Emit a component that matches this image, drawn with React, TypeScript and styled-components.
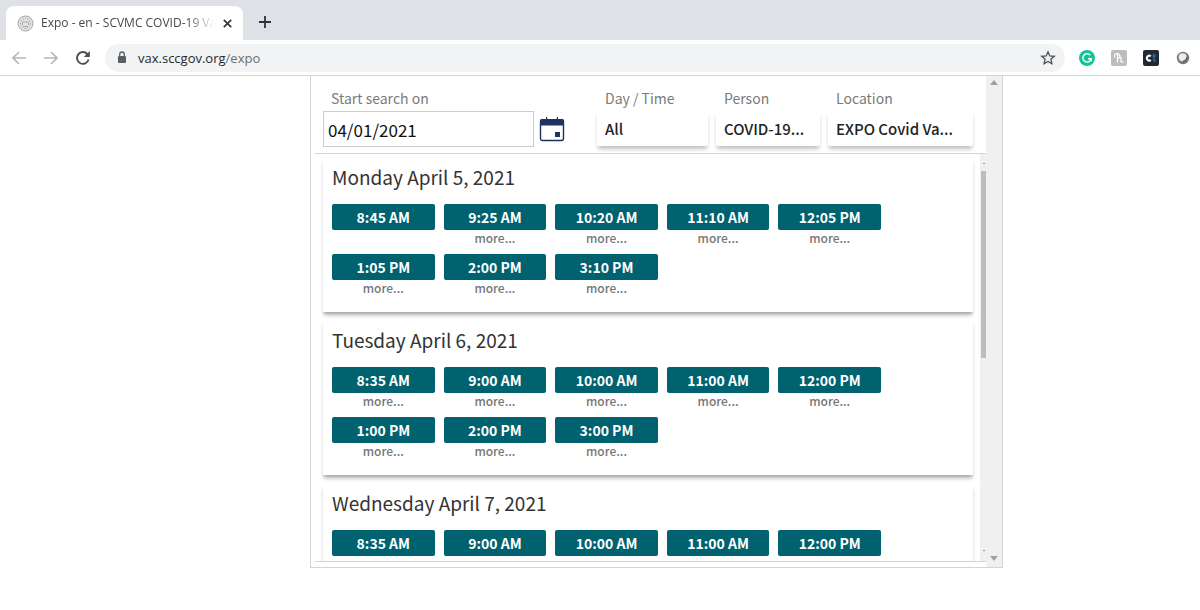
import React from "react";
import styled, { createGlobalStyle } from "styled-components";

const GlobalStyle = createGlobalStyle`
  * { box-sizing: border-box; }
  html, body { margin: 0; background: #fff; }
  body { font-family: "Noto Sans CJK SC", "Open Sans", sans-serif; color: #333; }
  button, input, select { font: inherit; color: inherit; border: 0; margin: 0; padding: 0; background: none; }
`;

const Window = styled.div`
  display: flex;
  flex-direction: column;
  height: 100vh;
  min-height: 400px;
`;

const TabStrip = styled.div`
  display: flex;
  align-items: flex-end;
  flex: none;
  height: 40px;
  padding-left: 6px;
  background: #dee1e6;
  font-family: "Open Sans", "Noto Sans", sans-serif;
`;

const Tab = styled.div`
  display: flex;
  align-items: center;
  width: 237px;
  height: 34px;
  padding: 0 10px 0 11px;
  border-radius: 8px 8px 0 0;
  background: #fff;
`;

const TabTitle = styled.span`
  flex: 1;
  margin: 0 6px 0 7px;
  overflow: hidden;
  white-space: nowrap;
  font-size: 12px;
  line-height: 16px;
  color: #45494d;
  mask-image: linear-gradient(to right, #000 84%, transparent);
`;

const IconButton = styled.button<{ $size: number }>`
  display: flex;
  align-items: center;
  justify-content: center;
  flex: none;
  width: ${(p) => p.$size}px;
  height: ${(p) => p.$size}px;
`;

const NewTab = styled(IconButton)`
  margin: 0 0 8px 12px;
`;

const Toolbar = styled.div`
  display: flex;
  align-items: center;
  flex: none;
  height: 36px;
  padding: 0 7px 0 9px;
  border-bottom: 1px solid #d3d6dc;
  font-family: "Open Sans", "Noto Sans", sans-serif;
`;

const NavButtons = styled.div`
  display: flex;
  gap: 12px;
  margin-right: 12px;
`;

const AddressBar = styled.div`
  display: flex;
  align-items: center;
  flex: 1;
  height: 28px;
  padding: 0 8px 0 11px;
  border-radius: 14px;
  background: #f1f3f4;
`;

const Address = styled.div`
  flex: 1;
  margin-left: 10px;
  font-size: 13px;
  line-height: 20px;
  color: #6a6e73;

  b { font-weight: 400; color: #26292c; }
`;

const Extensions = styled.div`
  display: flex;
  gap: 12px;
  margin-left: 12px;
`;

const Page = styled.main`
  display: flex;
  flex: 1;
  min-height: 0;
  padding: 0 197px 42px 310px;
`;

const Frame = styled.div`
  display: flex;
  flex: 1;
  min-width: 0;
  border: solid #cfd5d9;
  border-width: 0 1px 1px 1px;
`;

const FrameBody = styled.div`
  display: flex;
  flex-direction: column;
  flex: 1;
  min-width: 0;
  padding: 0 0 5px 4px;
`;

const ScrollBar = styled.div`
  display: flex;
  flex-direction: column;
  justify-content: space-between;
  align-items: center;
  flex: none;
  width: 16px;
  padding: 4px 0 6px;
  background: #f0f0f0;
`;

const Filters = styled.form`
  display: flex;
  gap: 8px;
  flex: none;
  height: 78px;
  padding: 12px 13px 0 8px;
  border-bottom: 1px solid #d5d5d5;
`;

const Field = styled.div<{ $width: number; $grow?: boolean }>`
  flex: ${(p) => (p.$grow ? "1 1" : "0 0")} ${(p) => p.$width}px;
  min-width: 0;
`;

const Label = styled.label`
  display: block;
  padding-left: 8px;
  font-size: 14px;
  line-height: 20px;
  color: #7a7a7a;
`;

const DateRow = styled.div`
  display: flex;
  align-items: center;
  gap: 5px;
  margin-top: 3px;
`;

const DateInput = styled.input`
  width: 211px;
  height: 36px;
  padding: 0 4px;
  border: 1px solid #ccc;
  font-size: 17px;
  color: #111;
`;

const Select = styled.select`
  display: block;
  width: 100%;
  height: 35px;
  margin-top: 3px;
  padding: 0 8px;
  appearance: none;
  border-radius: 2px;
  background: #fff;
  box-shadow: 0 4px 4px -1px rgba(0, 0, 0, 0.25);
  font-size: 15px;
  font-weight: 500;
  color: #222;
`;

const Results = styled.div`
  display: flex;
  flex: 1;
  min-height: 0;
  border-bottom: 1px solid #d5d5d5;
`;

const DayList = styled.div`
  display: flex;
  flex-direction: column;
  gap: 9px;
  flex: 1;
  min-width: 0;
  padding: 4px 7px 0 8px;
  overflow: hidden;
`;

const ResultsScroll = styled.div`
  display: flex;
  flex-direction: column;
  align-items: flex-end;
  justify-content: space-between;
  flex: none;
  width: 6px;
  padding: 9px 0 10px;
  background: #f0f0f0;
`;

const Thumb = styled.div`
  width: 5px;
  height: 187px;
  margin: 7px 0 auto;
  background: #bdbdbd;
`;

const Dot = styled.div`
  width: 2px;
  height: 1px;
  margin-right: 1px;
  background: #999;
`;

const DayCard = styled.section`
  flex: none;
  height: 154px;
  padding: 4px 9px 0;
  background: #fff;
  box-shadow: 0 4px 4px -1px rgba(0, 0, 0, 0.3), 0 2px 1px rgba(0, 0, 0, 0.06);
`;

const DayTitle = styled.h2`
  margin: 0 0 12px;
  font-size: 19px;
  font-weight: 400;
  line-height: 30px;
  color: #333;
`;

const Slots = styled.div`
  display: grid;
  grid-template-columns: repeat(5, 1fr);
  gap: 8px 9px;
  max-width: 549px;
`;

const Slot = styled.div`
  display: flex;
  flex-direction: column;
  height: 42px;
`;

const TimeButton = styled.button`
  height: 26px;
  border-radius: 2px;
  background: #00626e;
  font-size: 14px;
  font-weight: 700;
  line-height: 26px;
  color: #fff;
`;

const More = styled.a`
  align-self: center;
  font-size: 12px;
  font-weight: 500;
  line-height: 16px;
  color: #767676;
  text-decoration: none;
`;

type Time = { at: string; more: boolean };

const times = (list: string, withoutMore: string[] = []): Time[] =>
  list.split(", ").map((at) => ({ at, more: !withoutMore.includes(at) }));

const days = [
  {
    title: "Monday April 5, 2021",
    slots: times("8:45 AM, 9:25 AM, 10:20 AM, 11:10 AM, 12:05 PM, 1:05 PM, 2:00 PM, 3:10 PM", ["8:45 AM"]),
  },
  {
    title: "Tuesday April 6, 2021",
    slots: times("8:35 AM, 9:00 AM, 10:00 AM, 11:00 AM, 12:00 PM, 1:00 PM, 2:00 PM, 3:00 PM"),
  },
  {
    title: "Wednesday April 7, 2021",
    slots: times("8:35 AM, 9:00 AM, 10:00 AM, 11:00 AM, 12:00 PM", [
      "8:35 AM", "9:00 AM", "10:00 AM", "11:00 AM", "12:00 PM",
    ]),
  },
];

const SealIcon = () => (
  <svg width="17" height="17" viewBox="0 0 17 17" fill="none" stroke="#a3a3a3">
    <circle cx="8.500" cy="8.500" r="7.500" fill="#e4e4e4" />
    <circle cx="8.500" cy="8.500" r="5" strokeDasharray="1.500 1" />
    <path d="M5.500 10V7.500l1.500-1 1.500 1 1.500-1 1.500 1V10M6 11.500h5" />
  </svg>
);

const CalendarIcon = () => (
  <svg width="26" height="26" viewBox="0 0 26 26">
    <rect x="1.500" y="4" width="23" height="20.500" rx="2" fill="#fff" stroke="#1d2f5f" strokeWidth="1.400" />
    <path d="M1 9.500V4.500A1.500 1.500 0 0 1 2.500 3H7V1h1.200v2h9.600V1H19v2h4.500A1.500 1.500 0 0 1 25 4.500v5z" fill="#1f3263" />
    <rect x="16" y="16" width="5" height="5" fill="#1f3263" />
  </svg>
);

const Arrow = ({ down }: { down?: boolean }) => (
  <svg width="8" height="5" viewBox="0 0 8 5">
    <path d={down ? "M0 0h8L4 5z" : "M0 5h8L4 0z"} fill="#a0a0a0" />
  </svg>
);

export default function App() {
  return (
    <Window>
      <GlobalStyle />
      <TabStrip>
        <Tab>
          <SealIcon />
          <TabTitle>Expo - en - SCVMC COVID-19 Va</TabTitle>
          <IconButton $size={12} aria-label="Close tab">
            <svg width="9" height="9" viewBox="0 0 9 9" stroke="#333639" strokeWidth="1.700">
              <path d="M.8.8l7.400 7.400M8.200.8L.8 8.200" />
            </svg>
          </IconButton>
        </Tab>
        <NewTab $size={20} aria-label="New tab">
          <svg width="12" height="12" viewBox="0 0 12 12" stroke="#2f3235" strokeWidth="1.800">
            <path d="M6 0v12M0 6h12" />
          </svg>
        </NewTab>
      </TabStrip>

      <Toolbar>
        <NavButtons>
          <IconButton $size={20} aria-label="Back">
            <svg width="14" height="14" viewBox="0 0 14 14" fill="none" stroke="#b4b6b9" strokeWidth="1.600">
              <path d="M14 7H1.500M7 1L1 7l6 6" />
            </svg>
          </IconButton>
          <IconButton $size={20} aria-label="Forward">
            <svg width="14" height="14" viewBox="0 0 14 14" fill="none" stroke="#b4b6b9" strokeWidth="1.600">
              <path d="M0 7h12.500M7 1l6 6-6 6" />
            </svg>
          </IconButton>
          <IconButton $size={20} aria-label="Reload">
            <svg width="14" height="14" viewBox="0 0 14 14" fill="none" stroke="#4b4e52" strokeWidth="1.900">
              <path d="M12.600 8.600A5.900 5.900 0 1 1 11.300 3L12 3.800" />
              <path d="M13.800 0v6H7.800z" fill="#4b4e52" stroke="none" />
            </svg>
          </IconButton>
        </NavButtons>
        <AddressBar>
          <svg width="12" height="13" viewBox="0 0 12 13">
            <rect x="2" y="5" width="8" height="7" rx="1" fill="#5a5d61" />
            <path d="M3.700 5V3.300a2.300 2.300 0 0 1 4.600 0V5" fill="none" stroke="#5a5d61" strokeWidth="1.300" />
          </svg>
          <Address>
            <b>vax.sccgov.org</b>/expo
          </Address>
          <IconButton $size={18} aria-label="Bookmark this page">
            <svg width="16" height="16" viewBox="0 0 16 16" fill="none" stroke="#4b4e52" strokeWidth="1.300">
              <path d="M8 1.800l1.800 4.100 4.500.4-3.400 3 1 4.400L8 11.400l-3.900 2.300 1-4.400-3.400-3 4.500-.4z" />
            </svg>
          </IconButton>
        </AddressBar>
        <Extensions>
          <IconButton $size={20} aria-label="Grammar check">
            <svg width="16" height="16" viewBox="0 0 16 16">
              <circle cx="8" cy="8" r="8" fill="#15c39a" />
              <path d="M11.300 5.200A4.200 4.200 0 1 0 12.200 8.700H9M12.200 8.700v2.600" fill="none" stroke="#fff" strokeWidth="1.400" />
            </svg>
          </IconButton>
          <IconButton $size={20} aria-label="Coupons">
            <svg width="16" height="16" viewBox="0 0 16 16">
              <rect width="16" height="16" rx="2" fill="#bdbdbd" />
              <path d="M6.500 3v9.500M3.500 7.500C3 3.500 6 2.500 8 4.500S8.500 8 6.500 8M6.500 9C10 5.500 10.500 8 10 10s.5 2.500 2.500 2" fill="none" stroke="#fff" strokeWidth="1.300" />
            </svg>
          </IconButton>
          <IconButton $size={20} aria-label="ct">
            <svg width="16" height="16" viewBox="0 0 16 16" fill="none" strokeWidth="2">
              <rect width="16" height="16" rx="2" fill="#202a36" />
              <path d="M7.800 6.300A2.400 2.400 0 1 0 7.800 10" stroke="#fff" />
              <path d="M10.800 3.500v6c0 1 .6 1.500 2 1.200M9.500 6h3.500" stroke="#2a6f8c" strokeWidth="1.500" />
            </svg>
          </IconButton>
          <IconButton $size={20} aria-label="Sphere">
            <svg width="14" height="14" viewBox="0 0 14 14">
              <circle cx="7" cy="7" r="6.200" fill="#777" />
              <circle cx="6.700" cy="6.300" r="4" fill="#ececec" />
              <path d="M7 10.300a4 4 0 0 0 3.700-4" fill="none" stroke="#444" />
            </svg>
          </IconButton>
        </Extensions>
      </Toolbar>

      <Page>
        <Frame>
          <FrameBody>
            <Filters>
              <Field $width={266} $grow>
                <Label htmlFor="start">Start search on</Label>
                <DateRow>
                  <DateInput id="start" type="text" defaultValue="04/01/2021" />
                  <IconButton $size={26} type="button" aria-label="Open calendar">
                    <CalendarIcon />
                  </IconButton>
                </DateRow>
              </Field>
              <Field $width={111}>
                <Label htmlFor="day">Day / Time</Label>
                <Select id="day">
                  <option>All</option>
                </Select>
              </Field>
              <Field $width={104}>
                <Label htmlFor="person">Person</Label>
                <Select id="person">
                  <option>COVID-19...</option>
                </Select>
              </Field>
              <Field $width={145}>
                <Label htmlFor="location">Location</Label>
                <Select id="location">
                  <option>EXPO Covid Va...</option>
                </Select>
              </Field>
            </Filters>
            <Results>
              <DayList>
                {days.map((day) => (
                  <DayCard key={day.title}>
                    <DayTitle>{day.title}</DayTitle>
                    <Slots>
                      {day.slots.map((slot) => (
                        <Slot key={slot.at}>
                          <TimeButton>{slot.at}</TimeButton>
                          {slot.more && <More href="#more">more...</More>}
                        </Slot>
                      ))}
                    </Slots>
                  </DayCard>
                ))}
              </DayList>
              <ResultsScroll>
                <Dot />
                <Thumb />
                <Dot />
              </ResultsScroll>
            </Results>
          </FrameBody>
          <ScrollBar>
            <Arrow />
            <Arrow down />
          </ScrollBar>
        </Frame>
      </Page>
    </Window>
  );
}
